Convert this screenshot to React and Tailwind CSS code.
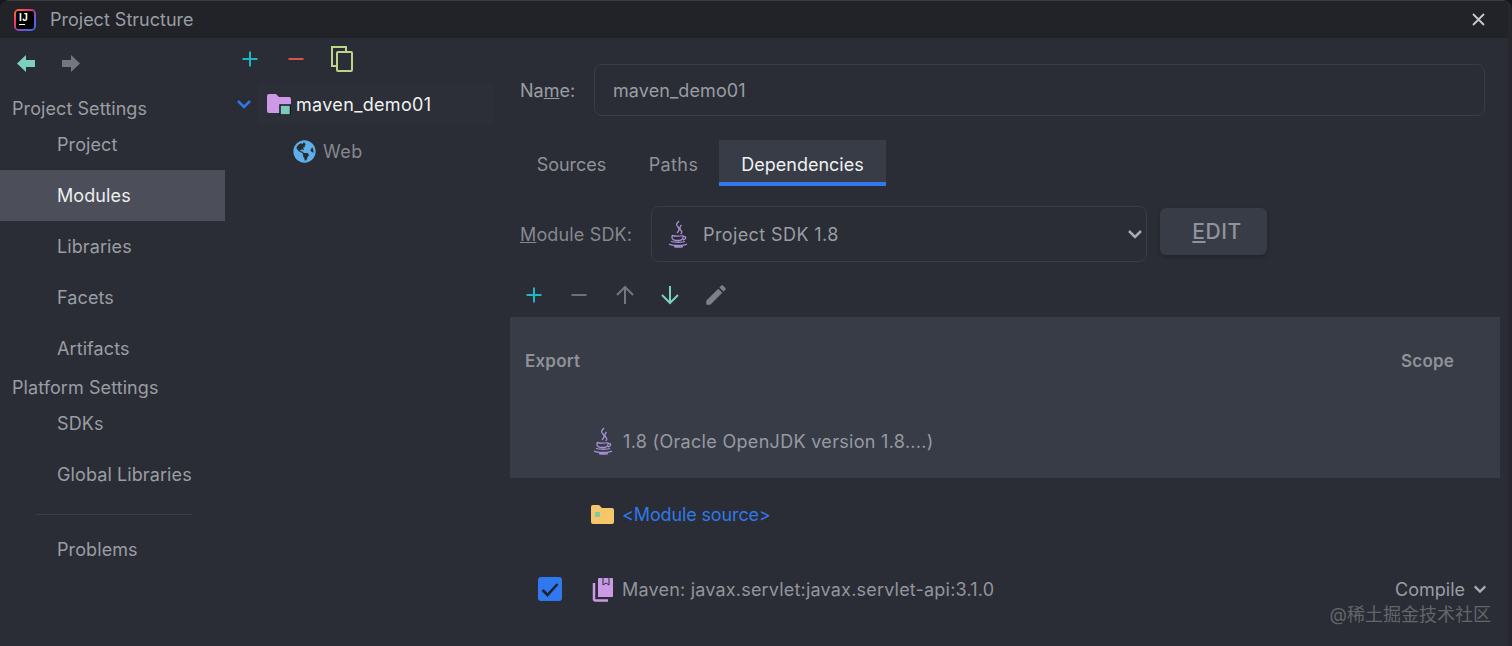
import React from 'react';
import { FaGlobeAmericas } from 'react-icons/fa';
import { MdEdit } from 'react-icons/md';

const PlusIcon = ({ color }) => (
  <svg width="18" height="18" viewBox="0 0 18 18" fill="none" stroke={color} strokeWidth="2">
    <path d="M9 1.500v15M1.500 9h15" />
  </svg>
);

const MinusIcon = ({ color }) => (
  <svg width="18" height="18" viewBox="0 0 18 18" fill="none" stroke={color} strokeWidth="2">
    <path d="M1.500 9h15" />
  </svg>
);

const ChevronIcon = ({ color, width = 16 }) => (
  <svg width={width} height={width} viewBox="0 0 16 16" fill="none" stroke={color} strokeWidth="2.500">
    <path d="M2 5l6 6 6-6" />
  </svg>
);

const JavaIcon = () => (
  <svg width="22" height="28" viewBox="0 0 22 28" fill="none" stroke="#a58fd2" strokeWidth="1.300">
    <path d="M12 1c-3 3-3 4-1 6s1 4-1 6M14.500 5c-2 2-2 4-.5 5.500s.5 3-.5 3.500" />
    <path d="M5 15.500c3 .8 9 .8 11 0M5 15.500v2c0 2 2 3 5.500 3s5.500-1 5.500-3v-2M16 16.500c3-.5 4 2.500 0 3.500" />
    <path d="M4 21.500c3 1 12 1 14 0M2 24c3 2 15 2 18 0M7 26.500c3 .7 6 .7 9 0" />
  </svg>
);

const LogoIcon = () => (
  <div className="w-[22px] h-[22px] rounded-[5px] bg-[linear-gradient(135deg,#fb7a2e_0%,#f0356b_35%,#7a4fd6_65%,#2477f0_100%)] p-[2px] shrink-0">
    <div className="w-full h-full rounded-[2px] bg-black flex flex-col pl-[3px] pt-[2px]">
      <span className="text-white text-[10px] leading-[9px] font-bold tracking-[0.5px] font-['Liberation_Sans',sans-serif]">IJ</span>
      <div className="w-[6px] h-[1px] bg-white mt-[2px]" />
    </div>
  </div>
);

const NavRow = ({ label, active }) => (
  <div className={`h-[51px] flex items-center pl-[57px] text-[18px] tracking-[0.1px] ${active ? 'bg-[#4c4f59] text-[#eceef0]' : 'text-[#9a9da3]'}`}>
    {label}
  </div>
);

const NavHeading = ({ label, className }) => (
  <div className={`flex items-center pl-[12px] text-[18px] tracking-[0.08px] text-[#9a9da3] ${className}`}>{label}</div>
);

const DepRow = ({ height, children }) => (
  <div className={`flex items-center ${height}`}>{children}</div>
);

export default function App() {
  return (
    <div className="w-[1512px] h-[646px] bg-[#17181b]">
      <div className="relative w-full h-full overflow-hidden flex flex-col rounded-t-[9px] bg-[#2a2d35] border-r-[4px] border-[#25272d] font-['Inter',sans-serif]">
        {/* title bar */}
        <div className="h-[38px] shrink-0 flex items-center bg-[#212329] border-t border-[#3a3c42] pl-[14px] pr-[22px]">
          <LogoIcon />
          <span className="ml-[14px] text-[18px] text-[#9a9da3]">Project Structure</span>
          <svg className="ml-auto" width="15" height="15" viewBox="0 0 15 15" fill="none" stroke="#c6c8cc" strokeWidth="1.800">
            <path d="M2 2l11 11M13 2L2 13" />
          </svg>
        </div>

        <div className="flex-1 flex min-h-0">
          {/* left nav */}
          <div className="w-[225px] shrink-0">
            <div className="h-[58px] flex items-center gap-[27px] pl-[17px] pb-[8px]">
              <svg width="18" height="17" viewBox="0 0 18 17" fill="#7ecfc0"><path d="M0 8.500L9 0v5h9v7H9v5z" /></svg>
              <svg width="18" height="17" viewBox="0 0 18 17" fill="#74777d"><path d="M18 8.500L9 0v5H0v7h9v5z" /></svg>
            </div>
            <NavHeading label="Project Settings" className="h-[23px] pt-[1px]" />
            <NavRow label="Project" />
            <NavRow label="Modules" active />
            <NavRow label="Libraries" />
            <NavRow label="Facets" />
            <NavRow label="Artifacts" />
            <NavHeading label="Platform Settings" className="h-[24px] pt-[3px]" />
            <NavRow label="SDKs" />
            <NavRow label="Global Libraries" />
            <div className="mt-[14px] ml-[36px] w-[156px] h-px bg-[#3a3d45]" />
            <div className="mt-[9px]">
              <NavRow label="Problems" />
            </div>
          </div>

          {/* module tree */}
          <div className="w-[285px] shrink-0">
            <div className="h-[46px] flex items-center pl-[16px] pb-[4px]">
              <PlusIcon color="#1fb5c4" />
              <div className="ml-[28px]"><MinusIcon color="#d9534f" /></div>
              <svg className="ml-[26px]" width="22" height="26" viewBox="0 0 22 26" fill="none" stroke="#bcd48a" strokeWidth="2">
                <path d="M5 20H1V1h14v4" />
                <rect x="6" y="6" width="15" height="19" rx="1" />
              </svg>
            </div>
            <div className="h-[40px] flex items-center pl-[11px]">
              <ChevronIcon color="#2f78e8" />
              <div className="ml-[5px] flex-1 mr-[17px] h-full flex items-center bg-[#2c2f37] rounded-l-[4px] pl-[10px]">
                <svg width="24" height="21" viewBox="0 0 24 21">
                  <path d="M0 2a2 2 0 0 1 2-2h7l3 3h10a2 2 0 0 1 2 2v14H2a2 2 0 0 1-2-2z" fill="#cb99e6" />
                  <rect x="13" y="11" width="10.500" height="10" fill="#7cc8bd" stroke="#14161a" strokeWidth="1.500" />
                </svg>
                <span className="ml-[5px] text-[18px] tracking-[0.33px] text-[#f0f1f2]">maven_demo01</span>
              </div>
            </div>
            <div className="h-[54px] flex items-center pl-[68px]">
              <FaGlobeAmericas className="text-[#5fb0ea] text-[23px]" />
              <span className="ml-[7px] text-[18px] tracking-[0.5px] text-[#85888e]">Web</span>
            </div>
          </div>

          {/* module detail */}
          <div className="flex-1 min-w-0 pr-[8px]">
            <div className="mt-[26px] h-[52px] flex items-center">
              <span className="w-[84px] pl-[10px] shrink-0 text-[18px] text-[#9a9da3]">
                Na<span className="underline">m</span>e:
              </span>
              <div className="w-[891px] h-full flex items-center pl-[18px] rounded-[8px] border border-[#3a3d45] text-[18px] tracking-[0.1px] text-[#9a9da3]">
                maven_demo01
              </div>
            </div>

            <div className="mt-[24px] h-[46px] flex pl-[8px] text-[18px] text-[#8f9298]">
              <div className="w-[107px] flex items-center justify-center pt-[2px]">Sources</div>
              <div className="w-[94px] flex items-center justify-center pt-[2px] pl-[3px] tracking-[0.4px]">Paths</div>
              <div className="w-[167px] flex items-center justify-center pt-[6px] bg-[#383c47] border-b-[4px] border-[#2f78f0] text-[#f0f1f2]">
                Dependencies
              </div>
            </div>

            <div className="mt-[20px] h-[56px] flex items-start">
              <span className="w-[141px] pl-[10px] shrink-0 h-full flex items-center text-[18px] tracking-[0.15px] text-[#85888e] whitespace-pre">
                <span className="underline">M</span>odule SDK:
              </span>
              <div className="w-[496px] h-full flex items-center rounded-[8px] border border-[#3a3d45] pl-[15px] pr-[3px]">
                <JavaIcon />
                <span className="ml-[14px] text-[18px] tracking-[0.4px] text-[#9a9da3]">Project SDK 1.8</span>
                <div className="ml-auto"><ChevronIcon color="#a9acb1" /></div>
              </div>
              <div className="ml-[13px] mt-[2px] w-[107px] h-[47px] flex items-center justify-center pl-[7px] rounded-[6px] bg-[#383c47] shadow-[0_2px_4px_rgba(0,0,0,0.2)] text-[21px] font-medium tracking-[0.5px] text-[#8f949c]">
                <span className="underline">E</span>DIT
              </div>
            </div>

            <div className="h-[55px] flex items-center gap-[27px] pl-[15px] pt-[11px]">
              <PlusIcon color="#1fb5c4" />
              <MinusIcon color="#6d7076" />
              <svg width="20" height="20" viewBox="0 0 20 20" fill="none" stroke="#74777d" strokeWidth="2">
                <path d="M10 19V2M2 10l8-8 8 8" />
              </svg>
              <svg className="-ml-[2px]" width="20" height="20" viewBox="0 0 20 20" fill="none" stroke="#7ecfc0" strokeWidth="2">
                <path d="M10 1v17M2 10l8 8 8-8" />
              </svg>
              <MdEdit className="text-[#7d8086] text-[26px] -ml-[4px]" />
            </div>

            {/* dependency table */}
            <div className="bg-[#383c47]">
              <div className="h-[88px] flex items-center justify-between pl-[15px] pr-[46px] pt-[2px] text-[17px] font-semibold tracking-[0.2px] text-[#8f9298]">
                <span>Export</span>
                <span>Scope</span>
              </div>
              <DepRow height="h-[73px] pb-[1px]">
                <div className="ml-[81px] w-[24px] flex justify-center"><JavaIcon /></div>
                <span className="ml-[8px] text-[18px] tracking-[0.31px] text-[#969aa1]">1.8 (Oracle OpenJDK version 1.8....)</span>
              </DepRow>
            </div>
            <DepRow height="h-[73px]">
              <svg className="ml-[81px]" width="23" height="19" viewBox="0 0 23 19">
                <path d="M0 2a2 2 0 0 1 2-2h6l3 3h10a2 2 0 0 1 2 2v12a2 2 0 0 1-2 2H2a2 2 0 0 1-2-2z" fill="#f6c768" />
                <rect x="4" y="7" width="5" height="5" fill="#86c8a6" />
              </svg>
              <span className="ml-[8px] text-[18px] -tracking-[0.13px] text-[#2f78e8]">&lt;Module source&gt;</span>
            </DepRow>
            <DepRow height="h-[76px]">
              <div className="ml-[28px] w-[24px] h-[24px] rounded-[3px] bg-[#2f78f0] flex items-center justify-center">
                <svg width="18" height="15" viewBox="0 0 18 15" fill="none" stroke="#1b2330" strokeWidth="2.600">
                  <path d="M1.500 8l5 5 10-11" />
                </svg>
              </div>
              <svg className="ml-[30px]" width="22" height="25" viewBox="0 0 22 25" fill="none">
                <path d="M7 1h13a1 1 0 0 1 1 1v17a1 1 0 0 1-1 1H6V2a1 1 0 0 1 1-1z" fill="#cb99e6" />
                <path d="M11 1v7l3-2 3 2V1" stroke="#2a2d35" strokeWidth="1" />
                <path d="M2 6v16a1.500 1.500 0 0 0 1.500 1.500H16" stroke="#cb99e6" strokeWidth="2.500" />
              </svg>
              <span className="ml-[8px] text-[18px] tracking-[0.2px] text-[#92959b]">Maven: javax.servlet:javax.servlet-api:3.1.0</span>
              <span className="ml-auto text-[18px] text-[#9a9da3]">Compile</span>
              <div className="ml-[8px] mr-[13px]"><ChevronIcon color="#a9acb1" width={14} /></div>
            </DepRow>
          </div>
        </div>

        {/* site watermark */}
        <span className="absolute right-[17px] bottom-[19px] text-[18px] leading-[24px] text-[#63656b] font-['Inter','Noto_Sans_CJK_SC',sans-serif]">
          @稀土掘金技术社区
        </span>
      </div>
    </div>
  );
}
